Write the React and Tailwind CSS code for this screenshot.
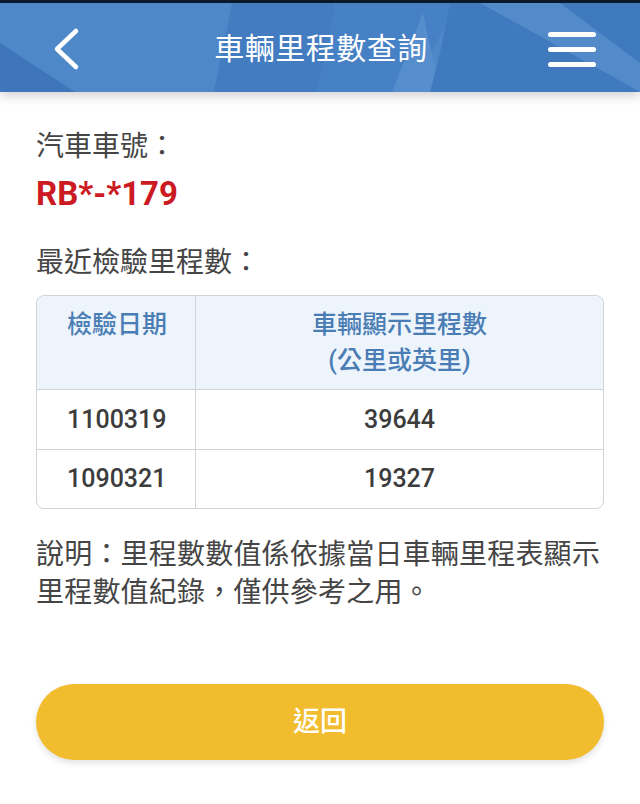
import React from "react";

export default function App() {
  const font = { fontFamily: 'Roboto, "Noto Sans CJK TC", "Noto Sans", sans-serif' };
  return (
    <div className="w-[640px] h-[804px] bg-white overflow-hidden" style={font}>
      <div className="h-[3px] bg-[#0c1a2c]" />
      <header className="relative h-[89px] bg-[#4f88c8] overflow-hidden shadow-[0_4px_10px_rgba(0,0,0,0.18)] z-10">
        <svg className="absolute inset-0" width="640" height="89" viewBox="0 0 640 89">
          <path d="M0 40 L75 89 L0 89 Z" fill="#3e75bb" />
          <path d="M232 0 L335 0 C330 30 322 60 318 89 L214 89 C220 55 228 25 232 0 Z" fill="#4079bf" opacity="0.8" />
          <path d="M335 0 L460 0 C440 30 425 60 415 89 L318 89 C322 60 330 30 335 0 Z" fill="#447fc3" opacity="0.7" />
          <path d="M423 10 L440 89 L392 89 Z" fill="#5b93d0" opacity="0.7" />
          <path d="M450 0 L640 0 L640 89 L430 89 C440 55 445 25 450 0 Z" fill="#3f79be" />
          <path d="M480 0 L560 0 L640 60 L640 89 Z" fill="#578fcd" opacity="0.8" />
        </svg>
        <div className="relative h-full flex items-center justify-between pl-[44px] pr-[44px] pt-[3px]">
          <svg width="46" height="46" viewBox="0 0 46 46" fill="none">
            <path d="M32 5 L13 23 L32 41" stroke="white" strokeWidth="4.5" strokeLinecap="round" strokeLinejoin="round" />
          </svg>
          <h1 className="text-white text-[30px] leading-none tracking-[0.5px] ml-[4px]">車輛里程數查詢</h1>
          <div className="flex flex-col gap-[10px] w-[48px]">
            <span className="block h-[5px] rounded-full bg-white" />
            <span className="block h-[5px] rounded-full bg-white" />
            <span className="block h-[5px] rounded-full bg-white" />
          </div>
        </div>
      </header>

      <main className="px-[36px] pt-[37px]">
        <p className="text-[28px] leading-[36px] text-[#454545]">汽車車號：</p>
        <p className="mt-[11px] text-[33px] leading-[36px] font-bold text-[#cc1a22]">RB*-*179</p>
        <p className="mt-[33px] text-[28px] leading-[36px] text-[#454545]">最近檢驗里程數：</p>

        <div className="mt-[14px] border-[1.5px] border-[#cfd3d8] rounded-[8px] overflow-hidden">
          <div className="grid grid-cols-[159px_1fr] bg-[#edf4fc] h-[93px] text-[#4a7db4] text-[25px] font-medium leading-[36px]">
            <div className="pl-[30px] pt-[11px] border-r-[1.5px] border-[#cfd3d8]">檢驗日期</div>
            <div className="text-center pt-[11px]">
              <div>車輛顯示里程數</div>
              <div>(公里或英里)</div>
            </div>
          </div>
          <div className="grid grid-cols-[159px_1fr] h-[60px] border-t-[1.5px] border-[#cfd3d8] text-[25px] text-[#3c3c3c] items-center font-medium">
            <div className="pl-[30px] h-full flex items-center border-r-[1.5px] border-[#cfd3d8]">1100319</div>
            <div className="text-center">39644</div>
          </div>
          <div className="grid grid-cols-[159px_1fr] h-[59px] border-t-[1.5px] border-[#cfd3d8] text-[25px] text-[#3c3c3c] items-center font-medium">
            <div className="pl-[30px] h-full flex items-center border-r-[1.5px] border-[#cfd3d8]">1090321</div>
            <div className="text-center">19327</div>
          </div>
        </div>

        <p className="mt-[27px] text-[28px] leading-[38px] text-[#454545] tracking-[0.2px]">
          說明：里程數數值係依據當日車輛里程表顯示里程數值紀錄，僅供參考之用。
        </p>

        <button className="mt-[72px] w-full h-[76px] rounded-full bg-[#f1bd2e] text-white text-[27px] font-medium shadow-[0_3px_6px_rgba(0,0,0,0.12)]">
          返回
        </button>
      </main>
    </div>
  );
}
